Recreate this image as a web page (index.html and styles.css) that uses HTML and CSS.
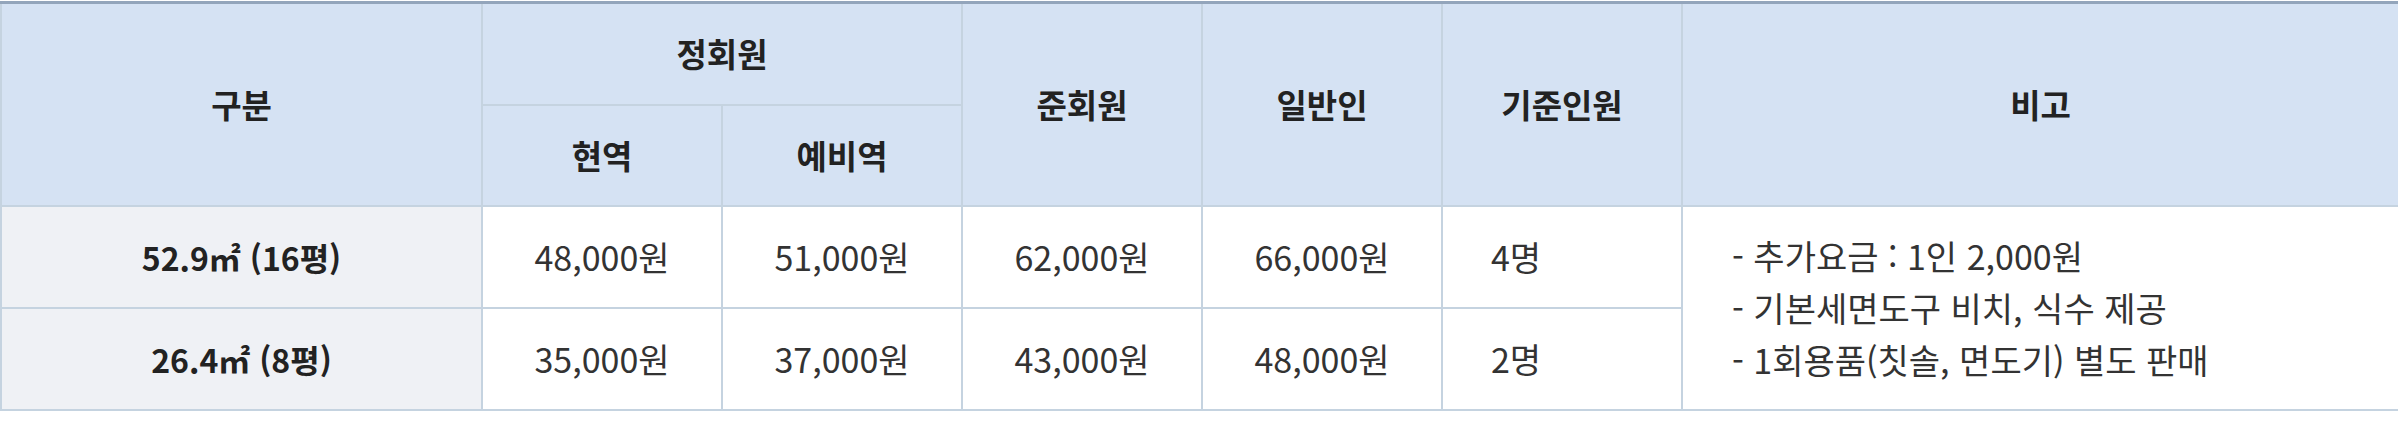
FILE: index.html
```html
<!DOCTYPE html>
<html lang="ko">
<head>
<meta charset="utf-8">
<title>요금표</title>
<link rel="stylesheet" href="styles.css">
</head>
<body>
<div class="price-table" role="table">
  <div class="cell head c1" role="columnheader">구분</div>
  <div class="cell head c2-3" role="columnheader">정회원</div>
  <div class="cell head c4" role="columnheader">준회원</div>
  <div class="cell head c5" role="columnheader">일반인</div>
  <div class="cell head c6" role="columnheader">기준인원</div>
  <div class="cell head c7" role="columnheader">비고</div>
  <div class="cell head" role="columnheader">현역</div>
  <div class="cell head" role="columnheader">예비역</div>

  <div class="cell label" role="rowheader">52.9㎡ (16평)</div>
  <div class="cell" role="cell">48,000원</div>
  <div class="cell" role="cell">51,000원</div>
  <div class="cell" role="cell">62,000원</div>
  <div class="cell" role="cell">66,000원</div>
  <div class="cell left" role="cell">4명</div>
  <div class="cell note" role="cell">
    <p>- 추가요금 : 1인 2,000원</p>
    <p>- 기본세면도구 비치, 식수 제공</p>
    <p>- 1회용품(칫솔, 면도기) 별도 판매</p>
  </div>

  <div class="cell label" role="rowheader">26.4㎡ (8평)</div>
  <div class="cell" role="cell">35,000원</div>
  <div class="cell" role="cell">37,000원</div>
  <div class="cell" role="cell">43,000원</div>
  <div class="cell" role="cell">48,000원</div>
  <div class="cell left" role="cell">2명</div>
</div>
</body>
</html>
```
FILE: styles.css
```css
html, body {
  margin: 0;
  padding: 0;
  background: #ffffff;
}

body {
  padding-top: 1px;
  font-family: "Noto Sans CJK KR", "Noto Sans", sans-serif;
}

.price-table {
  display: grid;
  grid-template-columns: 479px repeat(5, 238px) 1fr;
  grid-template-rows: 100px 99px 100px 100px;
  gap: 2px;
  padding: 0 0 2px 2px;
  background: #c5d3e0;
  border-top: 3px solid #93a5bb;
}

.cell {
  display: flex;
  align-items: center;
  justify-content: center;
  background: #ffffff;
  color: #333333;
  font-size: 34px;
  line-height: 1.2;
}

.head {
  background: #d5e2f3;
  color: #222222;
  font-size: 33px;
  font-weight: 700;
}

.c1 { grid-column: 1; grid-row: 1 / 3; }
.c2-3 { grid-column: 2 / 4; grid-row: 1; }
.c4 { grid-column: 4; grid-row: 1 / 3; }
.c5 { grid-column: 5; grid-row: 1 / 3; }
.c6 { grid-column: 6; grid-row: 1 / 3; }
.c7 { grid-column: 7; grid-row: 1 / 3; }

.label {
  background: #eff1f5;
  color: #222222;
  font-size: 32px;
  font-weight: 700;
}

.left {
  justify-content: flex-start;
  padding-left: 48px;
}

.note {
  grid-column: 7;
  grid-row: 3 / 5;
  flex-direction: column;
  align-items: flex-start;
  justify-content: center;
  padding-left: 49px;
}

.note p {
  margin: 0;
  line-height: 52px;
}
```
